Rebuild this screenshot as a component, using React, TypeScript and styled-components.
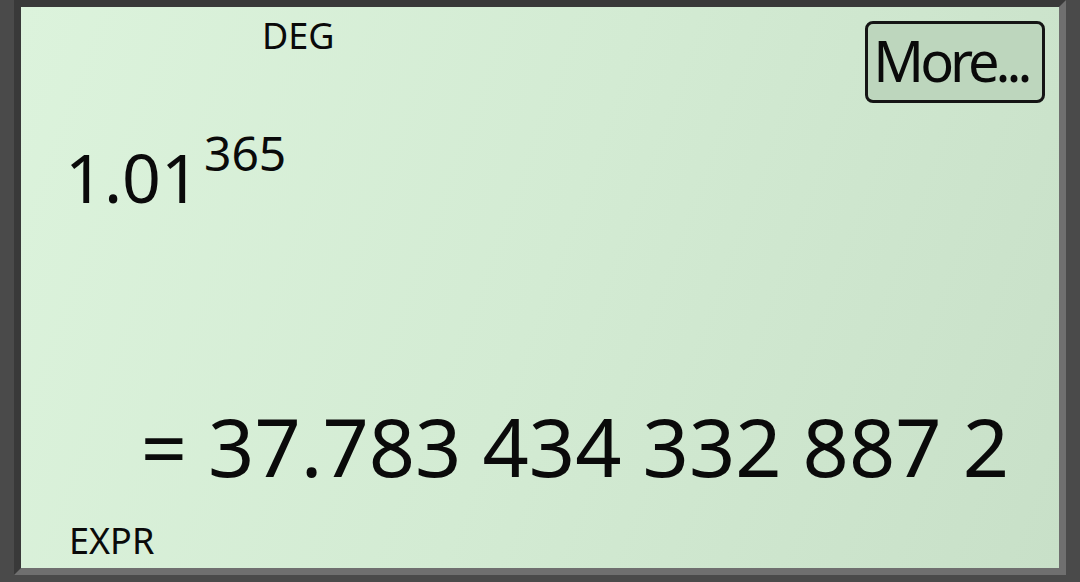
import React from "react";
import styled, { createGlobalStyle } from "styled-components";

const GlobalStyle = createGlobalStyle`
  html, body {
    margin: 0;
    padding: 0;
    background: #4a4a4a;
  }
  body {
    font-family: "Noto Sans", "Open Sans", sans-serif;
  }
`;

const Frame = styled.div`
  width: 1080px;
  height: 582px;
  box-sizing: border-box;
  padding: 0 14px 7px 14px;
  background: #4a4a4a;
`;

const Screen = styled.div`
  height: 100%;
  box-sizing: border-box;
  border: 7px solid;
  border-color: #393939 #6f6f6f #6f6f6f #393939;
  background: linear-gradient(110deg, #dcf3dc 0%, #d3ebd3 50%, #c8e0c8 100%);
  display: flex;
  flex-direction: column;
  color: #0a0a0a;
`;

const TopBar = styled.div`
  display: flex;
  align-items: flex-start;
  padding: 0 14px 0 0;
`;

const Indicator = styled.span<{ $offset: number }>`
  font-size: 36px;
  line-height: 1;
  margin-left: ${(p) => p.$offset}px;
`;

const AngleLabel = styled(Indicator)`
  margin-top: 11px;
`;

const MoreButton = styled.button`
  margin-left: auto;
  margin-top: 14px;
  width: 180px;
  height: 82px;
  box-sizing: border-box;
  border: 3px solid #151515;
  border-radius: 8px;
  background: #bdd6bd;
  font-family: inherit;
  font-size: 56px;
  letter-spacing: -4px;
  line-height: 1;
  color: #0a0a0a;
  padding: 0 8px 4px 0;
  cursor: pointer;
`;

const Expression = styled.div`
  margin-top: 40px;
  padding-left: 44px;
  font-size: 68px;
  line-height: 1;
`;

const Power = styled.span`
  font-size: 48px;
  line-height: 0;
  vertical-align: 32px;
  margin-left: 4px;
`;

const Result = styled.div`
  margin-top: auto;
  margin-bottom: 37px;
  padding-right: 50px;
  text-align: right;
  font-size: 81px;
  line-height: 1;
  white-space: nowrap;
`;

const Footer = styled.div`
  padding-bottom: 9px;
  display: flex;
`;

export default function App() {
  return (
    <>
      <GlobalStyle />
      <Frame>
        <Screen>
          <TopBar>
            <AngleLabel $offset={241}>DEG</AngleLabel>
            <MoreButton>More...</MoreButton>
          </TopBar>
          <Expression>
            1.01<Power>365</Power>
          </Expression>
          <Result>= 37.783 434 332 887 2</Result>
          <Footer>
            <Indicator $offset={48}>EXPR</Indicator>
          </Footer>
        </Screen>
      </Frame>
    </>
  );
}
